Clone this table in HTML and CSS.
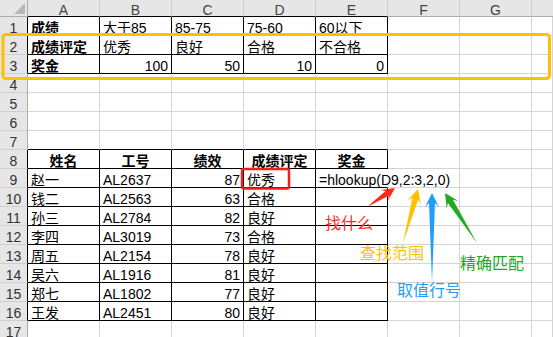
FILE: index.html
```html
<!DOCTYPE html>
<html lang="zh-CN">
<head>
<meta charset="utf-8">
<title>hlookup</title>
<link rel="stylesheet" href="styles.css">
</head>
<body>
<div class="sheet">
  <div class="grid">
    <div class="corner"><span class="tri"></span></div>
    <div class="h hk">A</div><div class="h hk">B</div><div class="h hk">C</div><div class="h hk">D</div><div class="h hk">E</div><div class="h">F</div><div class="h">G</div><div class="h hl"></div>

    <div class="r rk">1</div><div class="c k bd">成绩</div><div class="c k">大于85</div><div class="c k">85-75</div><div class="c k">75-60</div><div class="c k">60以下</div><div class="c"></div><div class="c"></div><div class="c"></div>
    <div class="r rk">2</div><div class="c k bd">成绩评定</div><div class="c k">优秀</div><div class="c k">良好</div><div class="c k">合格</div><div class="c k">不合格</div><div class="c"></div><div class="c"></div><div class="c"></div>
    <div class="r rk">3</div><div class="c k bd">奖金</div><div class="c k n">100</div><div class="c k n">50</div><div class="c k n">10</div><div class="c k n">0</div><div class="c"></div><div class="c"></div><div class="c"></div>
    <div class="r">4</div><div class="c"></div><div class="c"></div><div class="c"></div><div class="c"></div><div class="c"></div><div class="c"></div><div class="c"></div><div class="c"></div>
    <div class="r">5</div><div class="c"></div><div class="c"></div><div class="c"></div><div class="c"></div><div class="c"></div><div class="c"></div><div class="c"></div><div class="c"></div>
    <div class="r">6</div><div class="c"></div><div class="c"></div><div class="c"></div><div class="c"></div><div class="c"></div><div class="c"></div><div class="c"></div><div class="c"></div>
    <div class="r">7</div><div class="c kb"></div><div class="c kb"></div><div class="c kb"></div><div class="c kb"></div><div class="c kb"></div><div class="c"></div><div class="c"></div><div class="c"></div>
    <div class="r rk">8</div><div class="c k t">姓名</div><div class="c k t">工号</div><div class="c k t">绩效</div><div class="c k t">成绩评定</div><div class="c k t">奖金</div><div class="c"></div><div class="c"></div><div class="c"></div>
    <div class="r rk">9</div><div class="c k">赵一</div><div class="c k">AL2637</div><div class="c k n">87</div><div class="c k">优秀</div><div class="c k edit">=hlookup(D9,2:3,2,0)</div><div class="c"></div><div class="c"></div><div class="c"></div>
    <div class="r rk">10</div><div class="c k">钱二</div><div class="c k">AL2563</div><div class="c k n">63</div><div class="c k">合格</div><div class="c k"></div><div class="c"></div><div class="c"></div><div class="c"></div>
    <div class="r rk">11</div><div class="c k">孙三</div><div class="c k">AL2784</div><div class="c k n">82</div><div class="c k">良好</div><div class="c k"></div><div class="c"></div><div class="c"></div><div class="c"></div>
    <div class="r rk">12</div><div class="c k">李四</div><div class="c k">AL3019</div><div class="c k n">73</div><div class="c k">合格</div><div class="c k"></div><div class="c"></div><div class="c"></div><div class="c"></div>
    <div class="r rk">13</div><div class="c k">周五</div><div class="c k">AL2154</div><div class="c k n">78</div><div class="c k">良好</div><div class="c k"></div><div class="c"></div><div class="c"></div><div class="c"></div>
    <div class="r rk">14</div><div class="c k">吴六</div><div class="c k">AL1916</div><div class="c k n">81</div><div class="c k">良好</div><div class="c k"></div><div class="c"></div><div class="c"></div><div class="c"></div>
    <div class="r rk">15</div><div class="c k">郑七</div><div class="c k">AL1802</div><div class="c k n">77</div><div class="c k">良好</div><div class="c k"></div><div class="c"></div><div class="c"></div><div class="c"></div>
    <div class="r rk">16</div><div class="c k">王发</div><div class="c k">AL2451</div><div class="c k n">80</div><div class="c k">良好</div><div class="c k"></div><div class="c"></div><div class="c"></div><div class="c"></div>
    <div class="r">17</div><div class="c"></div><div class="c"></div><div class="c"></div><div class="c"></div><div class="c"></div><div class="c"></div><div class="c"></div><div class="c"></div>
  </div>

  <svg class="overlay" width="553" height="337" viewBox="0 0 553 337">
    <rect x="3" y="34.5" width="546.5" height="44" rx="3" fill="none" stroke="#ffc000" stroke-width="3"/>
    <rect x="242" y="169" width="47" height="19.5" rx="2" fill="none" stroke="#f01e1e" stroke-width="2.5"/>
    <polygon fill="#ff2a1a" points="367,207 388.8,195.8 387.9,200.7 395,188 380.6,189.9 385.5,190.9"/>
    <polygon fill="#ffc000" points="403,243 418.2,199.4 420.9,204.4 418,189 407.5,200.6 412.4,197.8"/>
    <polygon fill="#1e9fff" points="432,282 435,203 439,207 432,193 425,207 429,203"/>
    <polygon fill="#22aa22" points="477,243 452.9,199.8 458.4,201 445,193 446.7,208.6 447.9,203"/>
    <text class="lbl" x="325" y="228.5" fill="#ff2a2a">找什么</text>
    <text class="lbl" x="360" y="258.5" fill="#ffc000">查找范围</text>
    <text class="lbl" x="460" y="268.5" fill="#22a822">精确匹配</text>
    <text class="lbl" x="397" y="295.5" fill="#1e9fff">取值行号</text>
  </svg>
</div>
</body>
</html>
```

FILE: styles.css
```css
html, body {
  margin: 0;
  padding: 0;
  background: #ffffff;
  overflow: hidden;
}

body {
  font-family: "Liberation Sans", "Noto Sans CJK SC", sans-serif;
  font-size: 14px;
  color: #000000;
}

.sheet {
  position: relative;
  width: 553px;
  height: 337px;
  overflow: hidden;
}

.grid {
  display: grid;
  grid-template-columns: 28px repeat(7, 72px) 21px;
  grid-template-rows: 17px;
  grid-auto-rows: 19px;
}

.grid > div {
  box-sizing: border-box;
  white-space: nowrap;
}

.corner {
  position: relative;
  background: #e6e6e6;
  border-right: 1px solid #ababab;
  border-bottom: 1px solid #ababab;
}

.tri {
  position: absolute;
  right: 2px;
  bottom: 2px;
  width: 0;
  height: 0;
  border-left: 11px solid transparent;
  border-bottom: 11px solid #b7b7b7;
}

.h {
  background: #e6e6e6;
  border-right: 1px solid #cfcfcf;
  border-bottom: 1px solid #ababab;
  color: #444444;
  text-align: center;
  padding-top: 3px;
  line-height: 15px;
}

.hk {
  border-bottom-color: #000000;
}

.hl {
  border-right: none;
}

.r {
  background: #e6e6e6;
  border-right: 1px solid #ababab;
  border-bottom: 1px solid #cfcfcf;
  color: #333333;
  text-align: center;
  padding-top: 4px;
  line-height: 15px;
}

.rk {
  border-right-color: #000000;
}

.c {
  border-right: 1px solid #d4d4d4;
  border-bottom: 1px solid #d4d4d4;
  padding: 4px 3px 0 3px;
  line-height: 15px;
  overflow: visible;
}

.k {
  border-right-color: #000000;
  border-bottom-color: #000000;
}

.kb {
  border-bottom-color: #000000;
}

.bd {
  font-weight: bold;
}

.t {
  font-weight: bold;
  text-align: center;
}

.n {
  text-align: right;
}

.edit {
  border-right-color: transparent;
  position: relative;
  z-index: 1;
}

.overlay {
  position: absolute;
  left: 0;
  top: 0;
  z-index: 2;
  pointer-events: none;
}

.lbl {
  font-family: "Noto Sans CJK SC", sans-serif;
  font-size: 16px;
}
```
